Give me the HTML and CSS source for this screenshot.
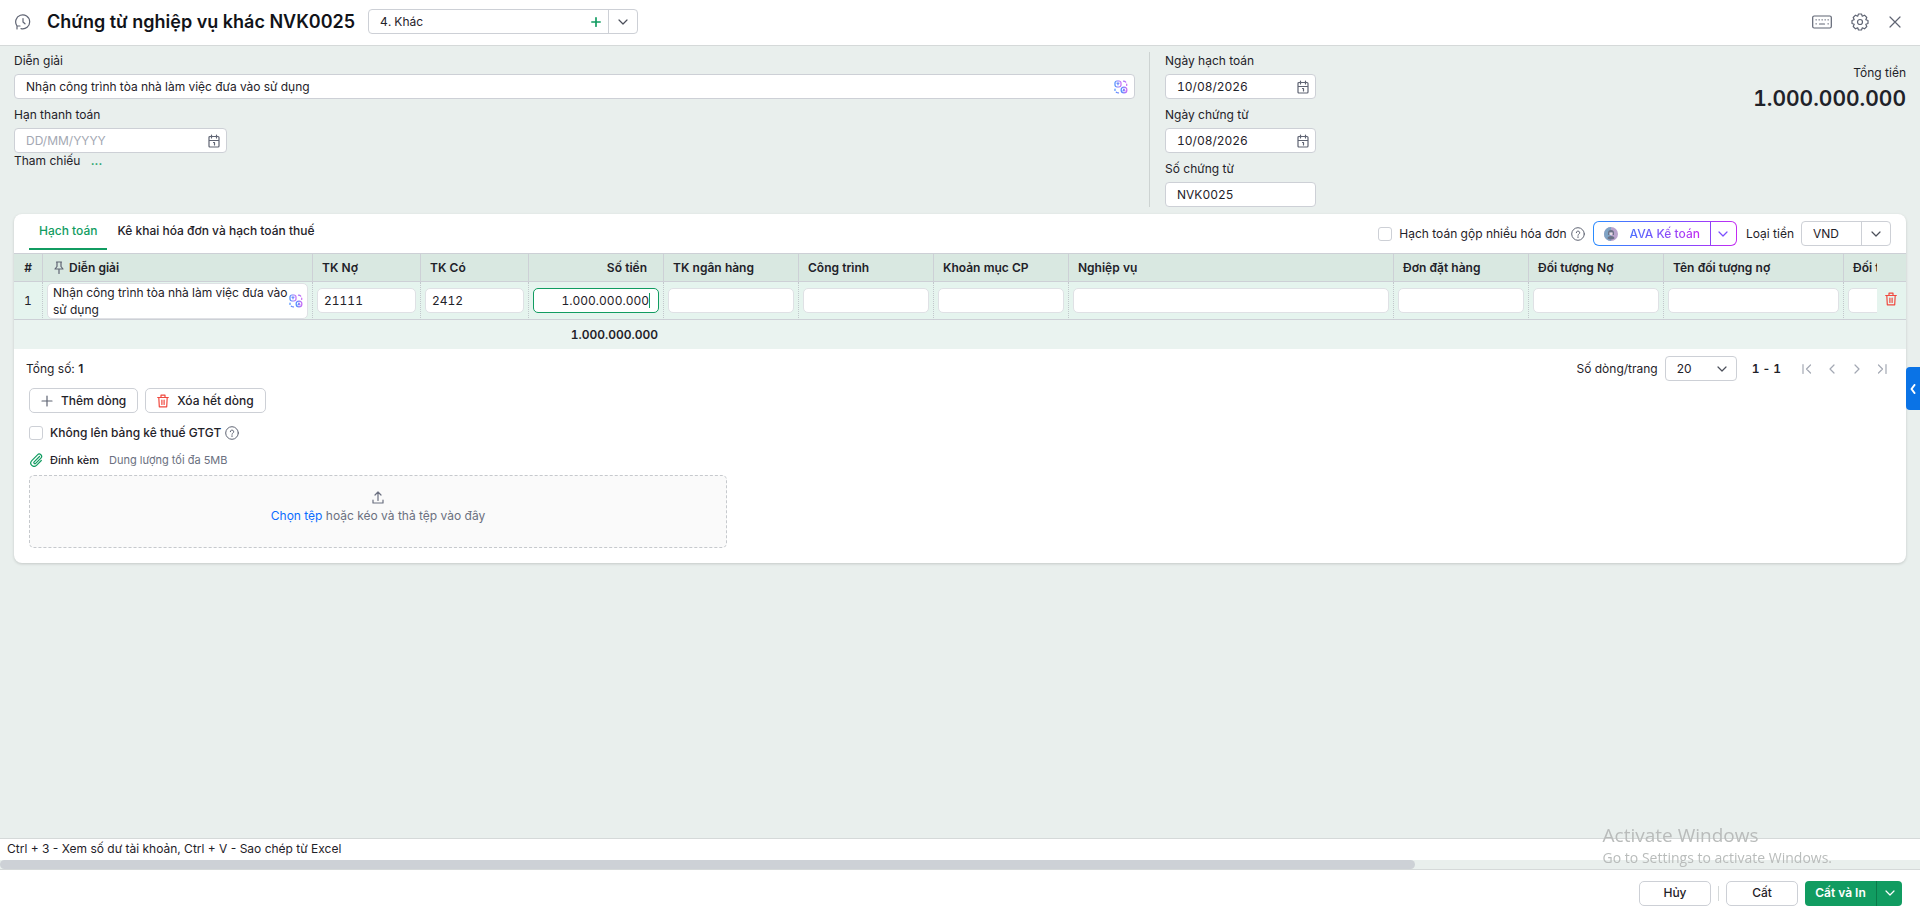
FILE: index.html
```
<!DOCTYPE html>
<html lang="vi">
<head>
  <meta charset="UTF-8">
  <meta name="viewport" content="width=device-width, initial-scale=1.0">
  <title>Chứng từ nghiệp vụ khác NVK0025</title>
  <link rel="stylesheet" href="styles.css">
</head>
<body>
  <svg class="sprite" aria-hidden="true">
    <defs>
      <linearGradient id="ava" x1="0" y1="0" x2="1" y2="0">
        <stop offset="0" stop-color="#4a8dff"/>
        <stop offset="1" stop-color="#c86bf7"/>
      </linearGradient>
    </defs>
    <symbol id="i-chevron" viewBox="0 0 12 12"><path d="M2 4l4 4 4-4"/></symbol>
    <symbol id="i-plus" viewBox="0 0 12 12"><path d="M6 1v10M1 6h10"/></symbol>
    <symbol id="i-calendar" viewBox="0 0 12 14"><path d="M1 3.500q0-1 1-1h8q1 0 1 1v8.500q0 1-1 1H2q-1 0-1-1zM1 6.500h10M3.500 1v3M8.500 1v3M5.500 8.500h1v2.500"/></symbol>
    <symbol id="i-help" viewBox="0 0 14 14"><circle cx="7" cy="7" r="6.300"/><path d="M5.300 5.700a1.700 1.600 0 1 1 2.500 1.400q-.8.400-.8 1.200M7 9.700v.9"/></symbol>
    <symbol id="i-trash" viewBox="0 0 12 14"><path d="M.7 3.500h10.600M4 3.500V1.200h4v2.300M1.800 3.500l.5 9.300h7.400l.5-9.300M4.900 6v4.500M7.100 6v4.500"/></symbol>
    <symbol id="i-swap" viewBox="0 0 14 14"><rect x="1" y="1" width="6" height="6" rx="2"/><path d="M3 3.200h2M4 3.200v1.600M9.500 1.200q1.500 0 2.200 1M12.700 4v1.500M1 9v1.500M2.300 12.200q.9.700 2.200.700"/><circle cx="10" cy="10" r="2.900"/><path d="M9 11l1-2 1 2"/></symbol>
  </svg>

  <header class="topbar">
    <button class="icon-btn" aria-label="Lịch sử">
      <svg class="icon" width="16" height="16" viewBox="0 0 16 16"><path d="M2 12A7 7 0 1 1 6 14.700M2 12H5M2 12v3M8 4.500V8l2 1.800"/></svg>
    </button>
    <h1>Chứng từ nghiệp vụ khác NVK0025</h1>
    <div class="combo combo-type">
      <input type="text" value="4. Khác" aria-label="Loại chứng từ">
      <button class="combo-add" aria-label="Thêm"><svg class="icon" width="10" height="10"><use href="#i-plus"/></svg></button>
      <button class="combo-arrow" aria-label="Mở danh sách"><svg class="icon" width="12" height="12"><use href="#i-chevron"/></svg></button>
    </div>
    <div class="topbar-actions">
      <button class="icon-btn" aria-label="Phím tắt">
        <svg class="icon" width="20" height="14" viewBox="0 0 20 14"><rect x=".7" y="1" width="18.600" height="12" rx="1.500"/><path d="M4 4.800h.3M7 4.800h.3M10 4.800h.3M13 4.800h.3M16 4.800h.3M4 8.800h.3M16 8.800h.3M7.500 9h5"/></svg>
      </button>
      <button class="icon-btn" aria-label="Thiết lập">
        <svg class="icon" width="18" height="18" viewBox="0 0 18 18"><path d="M7.500 1h3l.8 2.200 2.200-1 2.300 2.300-1 2.200 2.200.8v3l-2.200.8 1 2.200-2.300 2.300-2.200-1-.8 2.200h-3l-.8-2.200-2.200 1-2.300-2.300 1-2.200L1 10.500v-3l2.200-.8-1-2.200 2.300-2.300 2.200 1z"/><circle cx="9" cy="9" r="2.500"/></svg>
      </button>
      <button class="icon-btn" aria-label="Đóng">
        <svg class="icon" width="14" height="14" viewBox="0 0 14 14"><path d="M2 2l10 10M12 2L2 12"/></svg>
      </button>
    </div>
  </header>

  <main>
    <section class="info">
      <div class="info-main">
        <div class="field">
          <label for="desc">Diễn giải</label>
          <div class="box">
            <input type="text" id="desc" value="Nhận công trình tòa nhà làm việc đưa vào sử dụng">
            <svg class="icon ava-icon" width="14" height="14"><use href="#i-swap"/></svg>
          </div>
        </div>
        <div class="field field-due">
          <label for="due">Hạn thanh toán</label>
          <div class="box">
            <input type="text" id="due" placeholder="DD/MM/YYYY">
            <svg class="icon" width="12" height="14"><use href="#i-calendar"/></svg>
          </div>
        </div>
        <div class="refs">Tham chiếu <a href="#">...</a></div>
      </div>
      <div class="info-dates">
        <div class="field">
          <label for="postDate">Ngày hạch toán</label>
          <div class="box">
            <input type="text" id="postDate" value="10/08/2026">
            <svg class="icon" width="12" height="14"><use href="#i-calendar"/></svg>
          </div>
        </div>
        <div class="field">
          <label for="docDate">Ngày chứng từ</label>
          <div class="box">
            <input type="text" id="docDate" value="10/08/2026">
            <svg class="icon" width="12" height="14"><use href="#i-calendar"/></svg>
          </div>
        </div>
        <div class="field">
          <label for="docNo">Số chứng từ</label>
          <div class="box"><input type="text" id="docNo" value="NVK0025"></div>
        </div>
      </div>
      <div class="total">
        <div>Tổng tiền</div>
        <div class="total-value">1.000.000.000</div>
      </div>
    </section>

    <section class="card">
      <div class="card-head">
        <nav class="tabs">
          <a href="#" class="tab active">Hạch toán</a>
          <a href="#" class="tab">Kê khai hóa đơn và hạch toán thuế</a>
        </nav>
        <div class="card-tools">
          <label class="check"><input type="checkbox">Hạch toán gộp nhiều hóa đơn</label>
          <svg class="icon help" width="14" height="14"><use href="#i-help"/></svg>
          <div class="ava">
            <button class="ava-main">
              <svg width="14" height="14" viewBox="0 0 14 14"><circle cx="7" cy="7" r="7" fill="#b9a3cc"/><path d="M0 7a7 7 0 0 1 7-7v14a7 7 0 0 1-7-7z" fill="#7fa3c4"/><path d="M4 6q0-3 3-3t3 3v2H8.500V5.500h-3V8H4zM3.500 11.500q0-2.500 3.500-2.500t3.500 2.500q-3.500 2-7 0z" fill="#6b7186"/><path d="M5.500 5.500h3v2q-1.500 1.500-3 0z" fill="#e6dce4"/></svg>
              <span>AVA Kế toán</span>
            </button>
            <button class="ava-arrow" aria-label="Mở AVA"><svg class="icon" width="12" height="12"><use href="#i-chevron"/></svg></button>
          </div>
          <label for="currency">Loại tiền</label>
          <div class="combo combo-currency">
            <input type="text" id="currency" value="VND">
            <button class="combo-arrow" aria-label="Chọn loại tiền"><svg class="icon" width="12" height="12"><use href="#i-chevron"/></svg></button>
          </div>
        </div>
      </div>

      <div class="grid">
        <div class="grid-scroll">
          <table>
            <colgroup>
              <col class="w-no"><col class="w-desc"><col class="w-acc"><col class="w-acc"><col class="w-std">
              <col class="w-std"><col class="w-std"><col class="w-std"><col class="w-biz"><col class="w-std">
              <col class="w-std"><col class="w-name"><col class="w-std">
            </colgroup>
            <thead>
              <tr>
                <th class="center">#</th>
                <th class="pinned"><svg class="icon" width="10" height="13" viewBox="0 0 10 13"><path d="M2.500 1h5M3 1v4.500L1 8h8L7 5.500V1M5 8v4.500"/></svg>Diễn giải</th>
                <th>TK Nợ</th>
                <th>TK Có</th>
                <th class="num">Số tiền</th>
                <th>TK ngân hàng</th>
                <th>Công trình</th>
                <th>Khoản mục CP</th>
                <th>Nghiệp vụ</th>
                <th>Đơn đặt hàng</th>
                <th>Đối tượng Nợ</th>
                <th>Tên đối tượng nợ</th>
                <th>Đối tượng Có</th>
              </tr>
            </thead>
            <tbody>
              <tr>
                <td class="center">1</td>
                <td>
                  <div class="cell-desc">
                    <textarea rows="2" aria-label="Diễn giải">Nhận công trình tòa nhà làm việc đưa vào sử dụng</textarea>
                    <svg class="icon ava-icon" width="14" height="14"><use href="#i-swap"/></svg>
                  </div>
                </td>
                <td><input type="text" value="21111" aria-label="TK Nợ"></td>
                <td><input type="text" value="2412" aria-label="TK Có"></td>
                <td><input type="text" class="num focused" value="1.000.000.000" aria-label="Số tiền"></td>
                <td><input type="text" aria-label="TK ngân hàng"></td>
                <td><input type="text" aria-label="Công trình"></td>
                <td><input type="text" aria-label="Khoản mục CP"></td>
                <td><input type="text" aria-label="Nghiệp vụ"></td>
                <td><input type="text" aria-label="Đơn đặt hàng"></td>
                <td><input type="text" aria-label="Đối tượng Nợ"></td>
                <td><input type="text" aria-label="Tên đối tượng nợ"></td>
                <td><input type="text" aria-label="Đối tượng Có"></td>
              </tr>
            </tbody>
            <tfoot>
              <tr>
                <td colspan="4"></td>
                <td class="num">1.000.000.000</td>
                <td colspan="8"></td>
              </tr>
            </tfoot>
          </table>
        </div>
        <div class="grid-actions">
          <div class="ga-head"></div>
          <div class="ga-row">
            <button class="icon-btn" aria-label="Xóa dòng"><svg class="icon" width="12" height="14"><use href="#i-trash"/></svg></button>
          </div>
          <div class="ga-foot"></div>
        </div>
      </div>

      <div class="paging">
        <div>Tổng số: <b>1</b></div>
        <div class="paging-right">
          <label for="pageSize">Số dòng/trang</label>
          <div class="select">
            <select id="pageSize"><option>20</option><option>50</option><option>100</option></select>
            <svg class="icon" width="12" height="12"><use href="#i-chevron"/></svg>
          </div>
          <div class="range"><span>1</span><span>-</span><span>1</span></div>
          <div class="pager">
            <button class="icon-btn" aria-label="Trang đầu"><svg class="icon" width="12" height="12" viewBox="0 0 12 12"><path d="M2 1.500v9M9.500 2l-4 4 4 4"/></svg></button>
            <button class="icon-btn" aria-label="Trang trước"><svg class="icon" width="12" height="12" viewBox="0 0 12 12"><path d="M8 2L4 6l4 4"/></svg></button>
            <button class="icon-btn" aria-label="Trang sau"><svg class="icon" width="12" height="12" viewBox="0 0 12 12"><path d="M4 2l4 4-4 4"/></svg></button>
            <button class="icon-btn" aria-label="Trang cuối"><svg class="icon" width="12" height="12" viewBox="0 0 12 12"><path d="M10 1.500v9M2.500 2l4 4-4 4"/></svg></button>
          </div>
        </div>
      </div>

      <div class="card-body">
        <div class="row-buttons">
          <button class="btn"><svg class="icon" width="12" height="12"><use href="#i-plus"/></svg>Thêm dòng</button>
          <button class="btn"><svg class="icon danger" width="12" height="14"><use href="#i-trash"/></svg>Xóa hết dòng</button>
        </div>
        <div class="vat">
          <label class="check"><input type="checkbox">Không lên bảng kê thuế GTGT</label>
          <svg class="icon help" width="14" height="14"><use href="#i-help"/></svg>
        </div>
        <div class="attach">
          <svg class="icon" width="14" height="14" viewBox="0 0 14 14"><path d="M10.500 3.500l-5.300 5.400a1 1 0 0 0 1.500 1.500l5.200-5.300a2.300 2.300 0 0 0-3.400-3.300L2.800 7.600a3.300 3.300 0 0 0 4.700 4.700l4.800-4.800"/></svg>
          <span class="attach-title">Đính kèm</span>
          <span class="attach-note">Dung lượng tối đa 5MB</span>
        </div>
        <div class="dropzone">
          <svg class="icon" width="12" height="13" viewBox="0 0 12 13"><path d="M6 9.500V1M3 4l3-3 3 3M1 9v3h10V9"/></svg>
          <div><a href="#">Chọn tệp</a> hoặc kéo và thả tệp vào đây</div>
        </div>
      </div>
    </section>
  </main>

  <div class="hint">Ctrl + 3 - Xem số dư tài khoản, Ctrl + V - Sao chép từ Excel</div>
  <div class="scrollbar"><div class="scroll-thumb"></div></div>
  <footer class="footer">
    <button class="btn btn-wide">Hủy</button>
    <span class="divider"></span>
    <button class="btn btn-wide">Cất</button>
    <div class="btn-split">
      <button>Cất và In</button>
      <button aria-label="Lựa chọn khác"><svg class="icon" width="12" height="12"><use href="#i-chevron"/></svg></button>
    </div>
  </footer>

  <button class="side-toggle" aria-label="Mở bảng bên"><svg class="icon" width="6" height="10" viewBox="0 0 6 10"><path d="M4.500 1L1.500 5l3 4"/></svg></button>

  <div class="watermark">
    <div class="watermark-title">Activate Windows</div>
    <div>Go to Settings to activate Windows.</div>
  </div>
</body>
</html>
```
FILE: styles.css
```
* {
  box-sizing: border-box;
}
body {
  margin: 0;
  min-height: 100vh;
  display: flex;
  flex-direction: column;
  background: #e9efed;
  color: #1f2229;
  font-family: Inter, "Liberation Sans", sans-serif;
  font-size: 12px;
  line-height: 18px;
}
button, input, select, textarea {
  font: inherit;
  color: inherit;
  margin: 0;
}
input, table, .total-value, .range {
  font-variant-numeric: tabular-nums;
}
button {
  cursor: pointer;
}
a {
  text-decoration: none;
}
.sprite {
  position: absolute;
  width: 0;
  height: 0;
}
.icon {
  flex: none;
  fill: none;
  stroke: currentColor;
  stroke-width: 1.2;
  stroke-linecap: round;
  stroke-linejoin: round;
}
.icon-btn {
  display: flex;
  padding: 0;
  border: 0;
  background: none;
  color: #5f6473;
}
.ava-icon {
  stroke: url(#ava);
}
.danger {
  color: #f0483e;
}

/* top bar */
.topbar {
  display: flex;
  align-items: center;
  height: 46px;
  padding: 0 18px 2px 15px;
  background: #fff;
  border-bottom: 1px solid #d5d9d9;
}
h1 {
  margin: 0 13px 0 16px;
  font-size: 18px;
  line-height: 24px;
  font-weight: 600;
  color: #111319;
}
.topbar-actions {
  display: flex;
  align-items: center;
  gap: 19px;
  margin-left: auto;
}
.combo {
  display: flex;
  height: 25px;
  background: #fff;
  border: 1px solid #cdd0d6;
  border-radius: 4px;
}
.combo input {
  flex: 1;
  min-width: 0;
  padding: 0 11px;
  border: 0;
  background: none;
  outline: none;
}
.combo button {
  display: flex;
  align-items: center;
  justify-content: center;
  width: 29px;
  padding: 0;
  border: 0;
  background: none;
  color: #4b4f5a;
}
.combo .combo-arrow {
  border-left: 1px solid #cdd0d6;
}
.combo .combo-add {
  width: 25px;
  color: #119c61;
}
.combo-add .icon {
  stroke-width: 2;
}
.combo-type {
  width: 270px;
}
.combo-currency {
  width: 90px;
}

/* document info */
main {
  flex: 1;
  padding: 6px 14px 0;
}
.info {
  display: flex;
}
.info-main {
  width: 1135px;
  flex: 0 1 auto;
  padding-right: 14px;
}
.info-dates {
  width: 167px;
  padding-left: 15px;
  border-left: 1px solid #cdd3d2;
}
.field {
  margin-bottom: 7px;
}
.field label {
  display: block;
  line-height: 18px;
  margin-bottom: 4px;
}
.info-dates .field:last-child {
  margin-bottom: 0;
}
.box {
  display: flex;
  align-items: center;
  height: 25px;
  padding-right: 6px;
  background: #fff;
  border: 1px solid #cdd0d6;
  border-radius: 4px;
  color: #5f6473;
}
.box input {
  flex: 1;
  min-width: 0;
  padding: 0 11px;
  border: 0;
  background: none;
  outline: none;
  color: #1f2229;
}
.box input::placeholder {
  color: #a3a8b3;
}
.info-main .field-due {
  width: 213px;
  margin-bottom: 0;
}
.refs {
  line-height: 16px;
}
.refs a {
  margin-left: 7px;
  color: #119c61;
  font-weight: 600;
}
.total {
  margin-left: auto;
  padding-top: 12px;
  text-align: right;
}
.total-value {
  font-size: 21px;
  line-height: 34px;
  font-weight: 600;
}

/* card */
.card {
  margin-top: 7px;
  background: #fff;
  border-radius: 8px;
  box-shadow: 0 1px 3px rgba(0, 0, 0, 0.16);
}
.card-head {
  display: flex;
  justify-content: space-between;
  height: 39px;
  padding: 0 15px;
}
.tabs {
  display: flex;
}
.tab {
  height: 36px;
  padding: 8px 10px 0;
  color: #1f2229;
  font-weight: 500;
}
.tab.active {
  color: #119c61;
  border-bottom: 2px solid #119c61;
}
.card-tools {
  display: flex;
  align-items: center;
}
.check {
  display: flex;
  align-items: center;
}
.check input {
  appearance: none;
  width: 14px;
  height: 14px;
  margin-right: 7px;
  background: #fff;
  border: 1px solid #cdd0d6;
  border-radius: 3px;
}
.help {
  margin-left: 4px;
  color: #5f6473;
  stroke-width: 1;
}
.ava {
  display: flex;
  height: 25px;
  margin: 0 9px 0 8px;
  border: 1px solid transparent;
  border-radius: 6px;
  background: linear-gradient(#fff, #fff) padding-box, linear-gradient(90deg, #2a8cff, #7a4dff 60%, #c42bf2) border-box;
}
.ava button {
  display: flex;
  align-items: center;
  padding: 0;
  border: 0;
  background: none;
}
.ava .ava-main {
  gap: 12px;
  padding: 0 10px;
}
.ava-main span {
  font-weight: 500;
  background: linear-gradient(90deg, #4a6fff, #c42bf2);
  background-clip: text;
  color: transparent;
}
.ava .ava-arrow {
  width: 26px;
  justify-content: center;
  border-left: 1px solid #8a45f5;
  color: #7a4dff;
}
.card-tools > label[for] {
  margin-right: 7px;
}

/* grid */
.grid {
  display: flex;
}
.grid-scroll {
  flex: 1;
  min-width: 0;
  overflow: hidden;
}
table {
  width: 1965px;
  table-layout: fixed;
  border-collapse: separate;
  border-spacing: 0;
}
.w-no { width: 29px; }
.w-desc { width: 270px; }
.w-acc { width: 108px; }
.w-std { width: 135px; }
.w-biz { width: 325px; }
.w-name { width: 180px; }
th {
  height: 29px;
  padding: 0 9px;
  background: #d9e8e1;
  border: 1px solid #cdd0d6;
  border-left: 0;
  text-align: left;
  font-weight: 600;
  line-height: 18px;
}
th.pinned {
  padding-left: 11px;
}
th.pinned svg {
  margin-right: 5px;
  vertical-align: -2px;
  color: #5f6473;
}
th.num {
  padding-right: 16px;
}
.center {
  text-align: center;
  padding: 0;
}
.num {
  text-align: right;
}
tbody td {
  height: 38px;
  padding: 0 4px;
  background: #e5f4ee;
  border-right: 1px dotted #c3c8cd;
  border-bottom: 1px solid #cdd0d6;
}
tbody .center {
  padding: 0;
}
tbody input {
  display: block;
  width: 100%;
  height: 25px;
  padding: 0 6px;
  background: #fff;
  border: 1px solid #dfe1e5;
  border-radius: 5px;
  outline: none;
}
tbody input.focused {
  padding-right: 9px;
  border-color: #119c61;
  background: linear-gradient(#119c61, #119c61) no-repeat right 8px center / 1px 15px, #fff;
}
.cell-desc {
  display: flex;
  align-items: center;
  height: 36px;
  padding-right: 4px;
  background: #fff;
  border: 1px solid #dfe1e5;
  border-radius: 5px;
}
.cell-desc textarea {
  flex: 1;
  min-width: 0;
  height: 34px;
  padding: 0 0 0 5px;
  line-height: 17px;
  border: 0;
  background: none;
  resize: none;
  outline: none;
  overflow: hidden;
}
tfoot td {
  height: 29px;
  padding: 0 6px;
  background: #eaf3f0;
  font-weight: 600;
}
.grid-actions {
  width: 29px;
}
.ga-head {
  height: 29px;
  background: #d9e8e1;
  border-top: 1px solid #cdd0d6;
  border-bottom: 1px solid #cdd0d6;
}
.ga-row {
  display: flex;
  align-items: center;
  padding: 0 0 4px 8px;
  height: 38px;
  background: #e5f4ee;
  border-bottom: 1px solid #cdd0d6;
}
.ga-row .icon-btn {
  color: #f0483e;
}
.ga-foot {
  height: 29px;
  background: #eaf3f0;
}

/* paging */
.paging {
  display: flex;
  align-items: center;
  justify-content: space-between;
  height: 39px;
  padding: 0 18px 0 12px;
}
.paging b {
  font-weight: 600;
}
.paging-right {
  display: flex;
  align-items: center;
}
.select {
  display: flex;
  align-items: center;
  position: relative;
  width: 72px;
  height: 25px;
  margin-left: 7px;
}
.select select {
  appearance: none;
  width: 100%;
  height: 25px;
  padding: 0 11px;
  background: #fff;
  border: 1px solid #cdd0d6;
  border-radius: 4px;
}
.select svg {
  position: absolute;
  right: 9px;
  pointer-events: none;
  color: #4b4f5a;
}
.range {
  display: flex;
  gap: 3px;
  margin: 0 20px 0 15px;
  font-weight: 600;
}
.pager {
  display: flex;
  gap: 13px;
}
.pager .icon-btn {
  color: #a3a8b3;
}

/* below the grid */
.card-body {
  padding: 0 15px 15px;
}
.row-buttons {
  display: flex;
  gap: 7px;
}
.btn {
  display: flex;
  align-items: center;
  justify-content: center;
  gap: 8px;
  height: 25px;
  padding: 0 11px;
  background: #fff;
  border: 1px solid #cdd0d6;
  border-radius: 5px;
  font-weight: 500;
}
.btn .icon:not(.danger) {
  color: #5f6473;
}
.vat {
  display: flex;
  align-items: center;
  margin-top: 11px;
  height: 18px;
  font-weight: 500;
}
.attach {
  display: flex;
  align-items: center;
  height: 18px;
  margin-top: 9px;
  font-size: 11px;
}
.attach .icon {
  color: #119c61;
}
.attach-title {
  margin: 0 10px 0 7px;
  font-weight: 500;
}
.attach-note {
  color: #6b7080;
}
.dropzone {
  display: flex;
  flex-direction: column;
  align-items: center;
  justify-content: center;
  width: 698px;
  max-width: 100%;
  height: 73px;
  margin-top: 6px;
  padding-bottom: 7px;
  background: #fafafa;
  border: 1px dashed #c6c9cd;
  border-radius: 5px;
  color: #6b7080;
}
.dropzone div {
  margin-top: 3px;
}
.dropzone a {
  color: #0a6cff;
}

/* bottom */
.hint {
  height: 22px;
  padding: 1px 7px 0;
  background: #fff;
  border-top: 1px solid #d5d9d9;
}
.scrollbar {
  height: 9px;
  background: #e9efed;
}
.scroll-thumb {
  width: 73.7%;
  height: 9px;
  background: #cdd1d6;
  border-radius: 5px;
}
.footer {
  display: flex;
  align-items: center;
  justify-content: flex-end;
  height: 47px;
  padding: 0 18px 0 0;
  background: #fff;
  border-top: 1px solid #d5d9d9;
}
.btn-wide {
  width: 72px;
}
.divider {
  width: 1px;
  height: 15px;
  margin: 0 7px;
  background: #d5d9d9;
}
.btn-split {
  display: flex;
  height: 25px;
  margin-left: 7px;
}
.btn-split button {
  display: flex;
  align-items: center;
  justify-content: center;
  width: 71px;
  padding: 0;
  border: 0;
  border-radius: 4px 0 0 4px;
  background: #119c61;
  color: #fff;
  font-weight: 600;
}
.btn-split button + button {
  width: 26px;
  border-left: 1px solid #0b7a4a;
  border-radius: 0 4px 4px 0;
}
.side-toggle {
  position: fixed;
  right: 0;
  top: 367px;
  display: flex;
  align-items: center;
  justify-content: center;
  width: 14px;
  height: 43px;
  padding: 0;
  border: 0;
  border-radius: 4px 0 0 4px;
  background: #0a73e6;
  color: #fff;
}
.side-toggle .icon {
  stroke-width: 2;
}
.watermark {
  position: fixed;
  right: 88px;
  bottom: 48px;
  color: #b9bcbb;
  font-family: "Open Sans", "Noto Sans", sans-serif;
  font-size: 14px;
  line-height: 20px;
  pointer-events: none;
}
.watermark-title {
  font-size: 19px;
  line-height: 26px;
}
```
